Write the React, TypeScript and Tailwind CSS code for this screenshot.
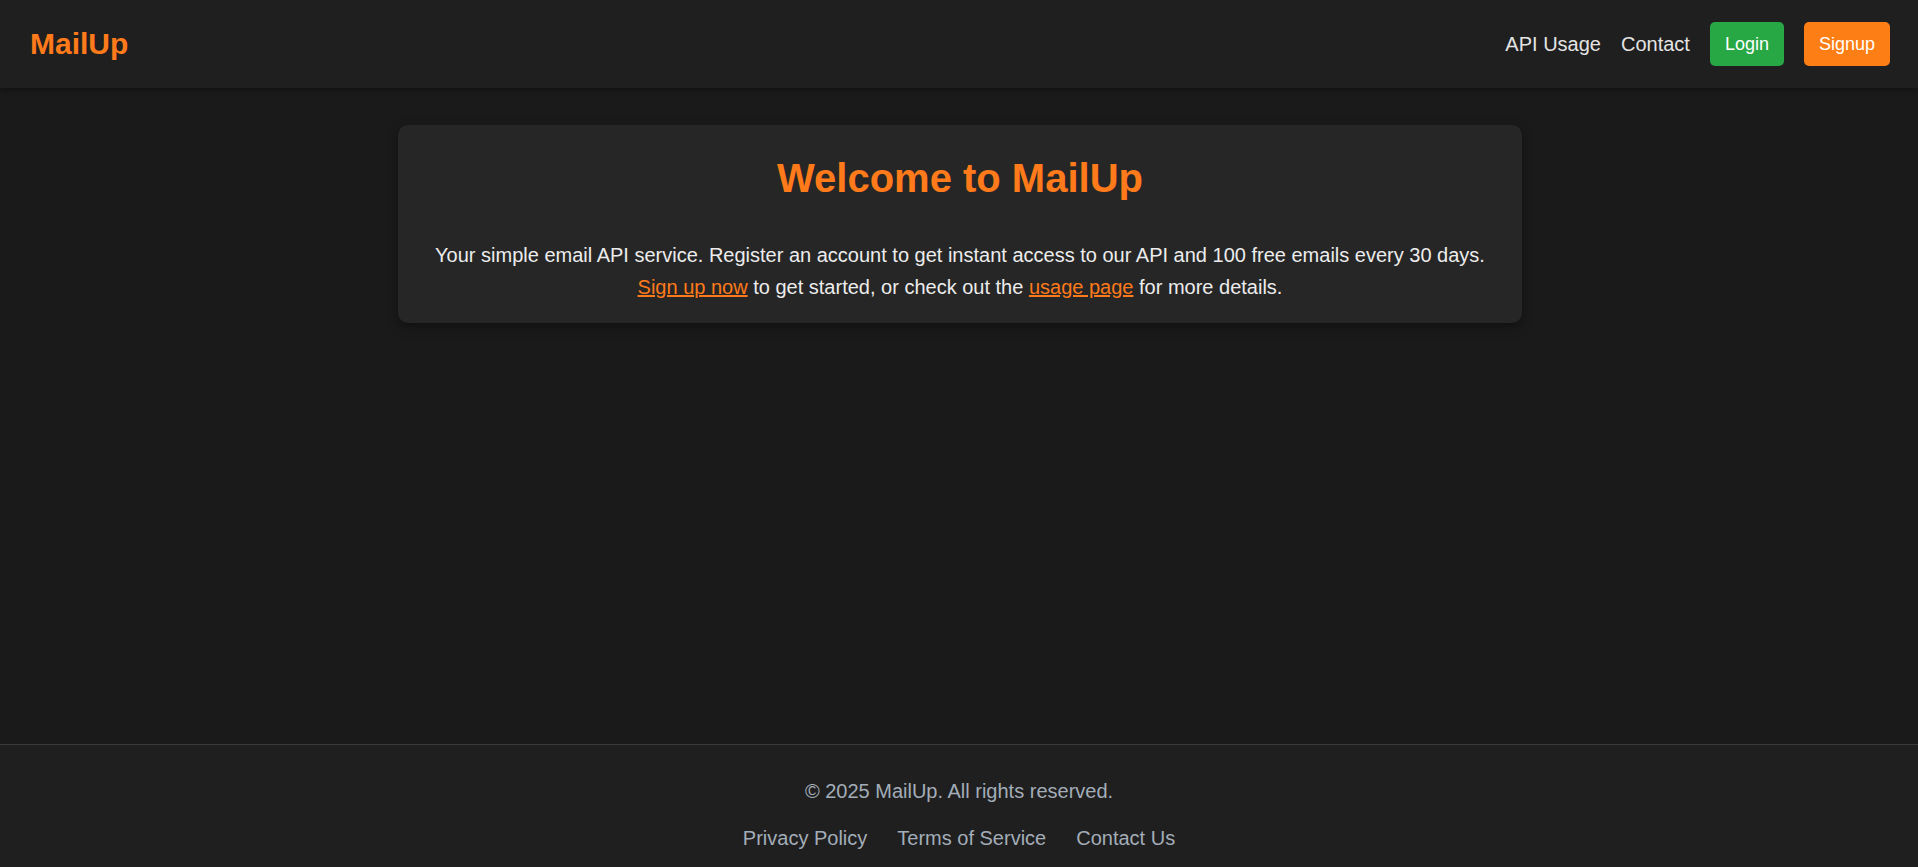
import React from 'react';

const font = { fontFamily: '"Liberation Sans", Arial, sans-serif' };

export default function App() {
  return (
    <div className="min-h-screen flex flex-col bg-[#1a1a1a] text-[#e8e8e8]" style={font}>
      <header className="h-[88px] shrink-0 bg-[#1f1f1f] shadow-[0_2px_6px_rgba(0,0,0,0.35)] flex items-center justify-between pl-[30px] pr-[28px]">
        <a href="#" className="text-[30px] font-bold text-[#ff7a1a] leading-none">MailUp</a>
        <nav className="flex items-center gap-[20px] text-[20px]">
          <a href="#" className="text-[#e4e4e4]">API Usage</a>
          <a href="#" className="text-[#e4e4e4]">Contact</a>
          <a href="#" className="h-[44px] px-[15px] flex items-center rounded-[5px] bg-[#28a745] text-white text-[18px]">Login</a>
          <a href="#" className="h-[44px] px-[15px] flex items-center rounded-[5px] bg-[#fd7e14] text-white text-[18px]">Signup</a>
        </nav>
      </header>

      <main className="flex-1 px-4">
        <div className="mx-auto mt-[37px] w-[1124px] translate-x-[1px] rounded-[10px] bg-[#262626] shadow-[0_4px_12px_rgba(0,0,0,0.35)] pt-[29px] pb-[20px] px-[25px] text-center">
          <h1 className="text-[40px] font-bold leading-[48px] text-[#ff7a1a]">Welcome to MailUp</h1>
          <p className="mt-[37px] text-[20px] leading-[32px] text-[#ececec]">
            Your simple email API service. Register an account to get instant access to our API and 100 free emails every 30 days.
            <br />
            <a href="#" className="underline text-[#ff7a1a]">Sign up now</a> to get started, or check out the{' '}
            <a href="#" className="underline text-[#ff7a1a]">usage page</a> for more details.
          </p>
        </div>
      </main>

      <footer className="shrink-0 bg-[#1f1f1f] border-t border-[#3a3a3a] pt-[30px] pb-[13px] text-center text-[20px] leading-[32px] text-[#a3adb8]">
        <p>© 2025 MailUp. All rights reserved.</p>
        <div className="mt-[15px] flex justify-center gap-[30px]">
          <a href="#">Privacy Policy</a>
          <a href="#">Terms of Service</a>
          <a href="#">Contact Us</a>
        </div>
      </footer>
    </div>
  );
}
